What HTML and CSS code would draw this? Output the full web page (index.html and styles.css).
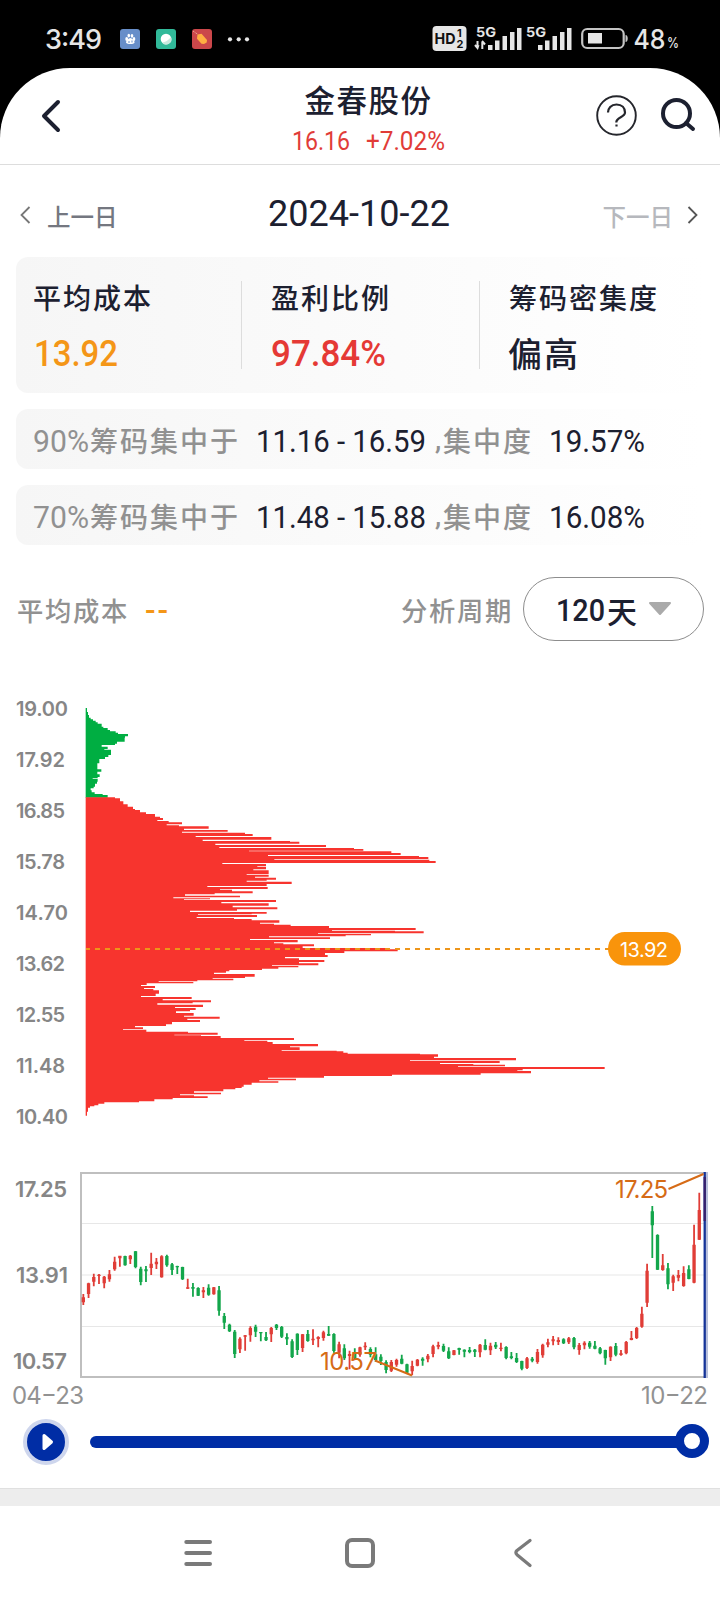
FILE: index.html
```html
<!DOCTYPE html>
<html lang="zh-CN">
<head>
<meta charset="utf-8">
<title>金春股份</title>
<link rel="stylesheet" href="styles.css">
</head>
<body>
<header class="status">
  <svg width="720" height="68" viewBox="0 0 720 68" fill="#e6e6e6">
    <text class="sys" x="45" y="49" font-size="27" textLength="57">3:49</text>
    <rect x="120" y="29" width="20" height="20" rx="3" fill="#678ec9"/>
    <g fill="#fff"><ellipse cx="126.7" cy="39" rx="1.4" ry="1.9"/><ellipse cx="128.8" cy="35.6" rx="1.3" ry="1.9"/><ellipse cx="132" cy="35.8" rx="1.3" ry="1.9"/><ellipse cx="134" cy="39" rx="1.3" ry="1.9"/><path d="M130.300 38c1.500 0 4.700 3.100 4.200 4.700-.6 1.700-7.600 1.700-8.400 0-.5-1.600 2.700-4.700 4.200-4.700z"/></g>
    <path d="M128 42h2M132 40.500v2" stroke="#678ec9"/>
    <rect x="156" y="29" width="20" height="20" rx="3" fill="#31b999"/>
    <circle cx="166" cy="39" r="5.300" fill="#fff"/><path d="M171 37a5.300 5.300 0 0 1-9 5.500q5-.5 9-5.500z" fill="#c9e9df"/>
    <rect x="192" y="29" width="20" height="20" rx="3" fill="#cb474a"/>
    <path d="M197.500 34.500l4-.8 5.500 6.300-.3 2.500-2.700 1.500-2.500-.3-4.500-5z" fill="#ffaf42"/><path d="M193 31l5 3.500" stroke="#f4c6a8" stroke-dasharray="1 1"/>
    <circle cx="230" cy="39.300" r="2.100"/><circle cx="238.700" cy="39.300" r="2.100"/><circle cx="247" cy="39.300" r="2.100"/>
    <rect x="432.500" y="26" width="34" height="25" rx="4"/>
    <g fill="#111"><text class="sys heavy" x="434.500" y="44" font-size="15" textLength="21" lengthAdjust="spacingAndGlyphs">HD</text><text class="sys heavy" x="457" y="37" font-size="11">1</text><text class="sys heavy" x="456.500" y="48" font-size="11">2</text></g>
    <text class="sys heavy" x="476" y="37" font-size="13" textLength="20" lengthAdjust="spacingAndGlyphs">5G</text>
    <text class="sys heavy" x="526" y="37" font-size="13" textLength="20" lengthAdjust="spacingAndGlyphs">5G</text>
    <path d="M477.500 41v6M475 45l2.500 3 1-3M482.300 49v-7M482 41l3 3.500" fill="none" stroke="#e6e6e6" stroke-width="2"/>
    <path d="M488 45h4.500v5H488zM495 40.500h4.500V50H495zM502.500 36h4.500v14h-4.500zM510 32h4.500v18H510zM517 28h4.500v22H517zM538 45h4.500v5H538zM545 40.500h4.500V50H545zM552.500 36h4.500v14h-4.500zM560 32h4.500v18H560zM567 28h4.500v22H567z"/>
    <rect x="582.200" y="29" width="41.500" height="19" rx="5" fill="none" stroke="#c4c4c4" stroke-width="2.200"/><rect x="588" y="33" width="14" height="10.500"/><path d="M625.500 35c3 0 3 7 0 7z" fill="#c4c4c4"/>
    <text class="sys" x="633.500" y="49" font-size="27" textLength="32" lengthAdjust="spacingAndGlyphs">48</text><text class="sys" x="667" y="48" font-size="14" textLength="12" lengthAdjust="spacingAndGlyphs">%</text>
  </svg>
</header>

<main class="app">
  <div class="titlebar">
    <svg class="back" width="64" height="40" viewBox="0 0 64 40"><path d="M58 6L44 20l14 14" fill="none" stroke="#1c2030" stroke-width="4" stroke-linecap="round" stroke-linejoin="round"/></svg>
    <div class="stock">
      <h1>金春股份</h1>
      <svg width="154" height="26" viewBox="0 0 154 26" class="num" fill="#e13c38" font-size="25"><text x="-1" y="22" textLength="58" lengthAdjust="spacingAndGlyphs">16.16</text><text x="73" y="22" textLength="79" lengthAdjust="spacingAndGlyphs">+7.02%</text></svg>
    </div>
    <svg class="tools" width="102" height="44" viewBox="0 0 102 44" fill="none">
      <circle cx="21.500" cy="22.500" r="19.300" stroke="#25262c" stroke-width="1.900"/>
      <path d="M13 19.500c0-4 3-8 8.500-8s8.500 3.500 8.500 8c0 5-9 4.500-8.700 10M21.500 31.500v2" stroke="#25262c" stroke-width="2.200"/>
      <circle cx="81.500" cy="20.500" r="13.500" stroke="#1c2030" stroke-width="4"/><path d="M91 30l7 6" stroke="#1c2030" stroke-width="4" stroke-linecap="round"/>
    </svg>
  </div>

  <nav class="days">
    <div class="prev"><svg width="11" height="18" viewBox="0 0 11 18"><path d="M9.500 1L1.500 9l8 8" fill="none" stroke="#777" stroke-width="1.800"/></svg><span>上一日</span></div>
    <svg width="182" height="40" viewBox="0 0 182 40" class="num" fill="#1c2030" font-size="37.500"><text x="0" y="33" textLength="182" lengthAdjust="spacingAndGlyphs">2024-10-22</text></svg>
    <div class="next"><span>下一日</span><svg width="11" height="18" viewBox="0 0 11 18"><path d="M1.500 1l8 8-8 8" fill="none" stroke="#555" stroke-width="1.800"/></svg></div>
  </nav>

  <section class="summary">
    <div class="cell"><b>平均成本</b><svg width="90" height="40" viewBox="0 0 90 40" class="num mid" fill="#f49617" font-size="36.500"><text x="0" y="32" textLength="84" lengthAdjust="spacingAndGlyphs">13.92</text></svg></div>
    <div class="cell"><b>盈利比例</b><svg width="120" height="40" viewBox="0 0 120 40" class="num mid" fill="#e53935" font-size="36.500"><text x="-1" y="32" textLength="115" lengthAdjust="spacingAndGlyphs">97.84%</text></svg></div>
    <div class="cell"><b>筹码密集度</b><strong>偏高</strong></div>
  </section>

  <section class="range">
    <svg width="57" height="34" viewBox="0 0 57 34" class="num" fill="#919191" font-size="31"><text x="0" y="27" textLength="56" lengthAdjust="spacingAndGlyphs">90%</text></svg><span class="lead">筹码集中于</span>
    <svg class="num span" width="178" height="34" viewBox="0 0 178 34" fill="#1c2030" font-size="31"><text x="-1" y="27" textLength="170" lengthAdjust="spacingAndGlyphs">11.16 - 16.59</text></svg>
    <span class="mark">,</span><span class="focus">集中度</span>
    <svg class="num" width="98" height="34" viewBox="0 0 98 34" fill="#1c2030" font-size="31"><text x="-1" y="27" textLength="96" lengthAdjust="spacingAndGlyphs">19.57%</text></svg>
  </section>
  <section class="range">
    <svg width="57" height="34" viewBox="0 0 57 34" class="num" fill="#919191" font-size="31"><text x="0" y="27" textLength="56" lengthAdjust="spacingAndGlyphs">70%</text></svg><span class="lead">筹码集中于</span>
    <svg class="num span" width="178" height="34" viewBox="0 0 178 34" fill="#1c2030" font-size="31"><text x="-1" y="27" textLength="170" lengthAdjust="spacingAndGlyphs">11.48 - 15.88</text></svg>
    <span class="mark">,</span><span class="focus">集中度</span>
    <svg class="num" width="98" height="34" viewBox="0 0 98 34" fill="#1c2030" font-size="31"><text x="-1" y="27" textLength="96" lengthAdjust="spacingAndGlyphs">16.08%</text></svg>
  </section>

  <section class="filter">
    <span>平均成本</span><i class="dash">--</i>
    <span class="period">分析周期</span>
    <div class="pill"><svg class="num mid" width="51" height="34" viewBox="0 0 51 34" fill="#1c2030" font-size="32"><text x="0" y="29" textLength="49" lengthAdjust="spacingAndGlyphs">120</text></svg><b>天</b><svg width="24" height="16" viewBox="0 0 24 16"><path d="M2 2h20L12 13z" fill="#aaa" stroke="#aaa" stroke-width="2" stroke-linejoin="round"/></svg></div>
  </section>

  <svg class="profile" width="720" height="510" viewBox="0 640 720 510">
    <g id="priceAxis" class="axis" fill="#868686" font-size="20"></g>
    <g transform="translate(60 780) scale(.33333)"><path id="loss" fill="#00ae42"/><path id="gain" fill="#f7342e"/></g>
    <path d="M86 949H610" stroke="#ee9519" stroke-width="2" stroke-dasharray="5 5" stroke-dashoffset="1"/>
    <rect x="608" y="932" width="73" height="33.500" rx="16.700" fill="#f9940b"/>
    <text class="axis light" x="620" y="957" font-size="20" textLength="48" fill="#fff">13.92</text>
  </svg>

  <svg class="kline" width="720" height="262" viewBox="0 1150 720 262">
    <path d="M81 1223.500H706M81 1275H706M81 1326.500H706" stroke="#e7e7e7"/>
    <rect x="81" y="1173" width="625" height="204" fill="none" stroke="#bfbfbf" stroke-width="2"/>
    <g id="candles" transform="translate(0 1150) scale(.33333)"></g>
    <path d="M704.700 1172v206" stroke="#15349a" stroke-width="2.300"/><path d="M704.700 1177v44" stroke="#38206c" stroke-width="2.300"/><path d="M707 1172v206" stroke="#b7bfdb" stroke-width="2"/>
    <path d="M668.500 1189l35-15M375 1360.500l37 15" stroke="#d66b16" stroke-width="2"/>
    <g class="axis" fill="#868686" font-size="22"><text x="15" y="1197" textLength="52">17.25</text><text x="16" y="1283" textLength="52">13.91</text><text x="13" y="1369" textLength="54">10.57</text></g>
    <g class="axis light" font-size="24"><text x="615" y="1198" textLength="53" fill="#d66b16">17.25</text><text x="320" y="1370" textLength="57" fill="#d66b16">10.57</text><text x="12" y="1404" textLength="72" fill="#929292">04−23</text><text x="641" y="1404" textLength="67" fill="#929292">10−22</text></g>
  </svg>

  <div class="player">
    <span class="play"><svg width="13" height="20" viewBox="0 0 13 20"><path d="M3 3.500L10.500 10 3 16.500z" fill="#fff" stroke="#fff" stroke-width="3" stroke-linejoin="round"/></svg></span>
    <span class="track"><span class="knob"></span></span>
  </div>
  <div class="band"></div>
  <footer class="keys">
    <svg width="720" height="94" viewBox="0 1506 720 94" fill="none" stroke="#7a7a7a" stroke-width="4" stroke-linecap="round" stroke-linejoin="round"><path d="M186.300 1542h23.700M186.300 1553h23.700M186.300 1564h23.700"/><rect x="347" y="1540" width="26" height="26" rx="5"/><path d="M530 1540.500l-13 10q-2.200 2 0 4.200l13 10.800" stroke-width="3.300"/></svg>
  </footer>
</main>
<script src="charts.js"></script>
</body>
</html>
```

FILE: styles.css
```css
* { box-sizing: border-box; }
body { margin: 0; width: 720px; height: 1600px; overflow: hidden; background: #000; font-family: "Noto Sans CJK SC", sans-serif; color: #1c2030; }
svg { display: block; flex: none; }
b, strong, h1 { font-weight: 500; margin: 0; }
.status { height: 68px; }
.sys { font-family: Inter, sans-serif; font-weight: 500; }
.heavy { font-weight: 700; }
.num { font-family: Roboto, sans-serif; font-weight: 450; overflow: visible; }
.mid { font-weight: 500; }
.axis { font-family: Inter, sans-serif; font-weight: 600; }
.light { font-weight: 400; }
.app { background: #fff; height: 1532px; border-radius: 70px 70px 0 0; display: flex; flex-direction: column; }
.titlebar { height: 97px; flex: none; border-bottom: 1px solid #ddd; display: grid; grid-template-columns: 250px 1fr 250px; }
.back { margin-top: 28px; }
.stock { display: flex; flex-direction: column; align-items: center; padding: 9px 0 0 17px; }
.stock h1 { font-size: 30.5px; line-height: 44px; height: 51px; letter-spacing: 1.5px; }
.stock svg { margin-left: 2px; }
.tools { margin: 25px 0 0 125px; }
.days { height: 92px; flex: none; padding: 0 22px 0 20px; display: grid; grid-template-columns: 1fr 182px 1fr; align-items: start; }
.days > svg { margin: 28px 0 0 0; }
.prev, .next { display: flex; align-items: center; font-size: 23.5px; font-weight: 500; line-height: 36px; padding-top: 33px; color: #747780; gap: 16px; }
.prev svg, .next svg { margin-top: -2px; }
.next { justify-content: flex-end; color: #b6b8bd; gap: 14px; }
.summary { flex: none; margin: 0 16px; height: 136px; border-radius: 12px; background: linear-gradient(90deg, #f6f6f6, #fff); display: grid; grid-template-columns: 226px 238px 1fr; padding: 24px 0; }
.cell { padding-left: 29px; height: 88px; border-right: 1px solid #ddd; display: flex; flex-direction: column; }
.cell:first-child { padding-left: 17px; }
.cell:last-child { border: 0; }
.cell b { flex: none; font-size: 28px; line-height: 32px; letter-spacing: 2px; height: 43px; white-space: nowrap; }
.cell svg { margin: 10px 0 -8px 1px; }
.cell strong { flex: none; font-size: 34px; line-height: 40px; letter-spacing: 2px; margin: 9px 0 -6px -1px; }
.range { flex: none; height: 60px; margin: 16px 16px 0; border-radius: 12px; padding: 0 0 0 17px; background: linear-gradient(90deg, #f6f6f6, #fff); display: flex; align-items: center; font-size: 28px; letter-spacing: 2px; font-weight: 500; line-height: 40px; color: #919191; white-space: nowrap; }
.range svg { margin-top: 5px; letter-spacing: 0; }
.range .lead, .range .focus { margin-top: 1px; }
.lead { width: 167px; }
.mark { font-family: Roboto, sans-serif; width: 8px; letter-spacing: 0; margin-top: 2px; }
.focus { width: 107px; }
.filter { height: 64px; flex: none; margin: 32px 16px 0; display: flex; align-items: center; font-size: 26.3px; font-weight: 450; letter-spacing: 1.7px; color: #919191; line-height: 40px; }
.filter > span { position: relative; left: 1px; top: 1px; }
.dash { font: 500 31px Roboto, sans-serif; letter-spacing: 2px; color: #f49617; margin: 2px 0 0 17px; }
.period { margin-left: auto; margin-right: 11px; }
.pill { width: 181px; height: 64px; border: 1px solid #8d8d8d; border-radius: 32px; display: flex; align-items: center; padding-left: 32px; color: #1c2030; letter-spacing: 0; }
.pill b { font-size: 30px; line-height: 40px; margin: 2px 11px 0 0; }
.profile, .kline { flex: none; }
.profile { margin-top: -1px; }
.player { flex: none; height: 76px; display: flex; align-items: flex-start; padding: 7px 17px 0 23px; }
.play { width: 46px; height: 46px; border-radius: 50%; background: #002da5; border: 4px solid #ced6ed; display: flex; align-items: center; justify-content: center; margin-right: 21px; padding-left: 3px; }
.track { width: 610px; height: 12px; margin-top: 17px; border-radius: 6px; background: #002da5; position: relative; }
.knob { position: absolute; right: -9px; top: -12px; width: 34px; height: 34px; border: 9px solid #002da5; border-radius: 50%; background: #fff; }
.band { flex: none; height: 18px; background: #ededed; border-top: 1px solid #e0e0e0; }
.keys { height: 94px; flex: none; }
```

FILE: charts.js
```js
const NS = 'http://www.w3.org/2000/svg';

// Price axis of the cost distribution
['19.00', '17.92', '16.85', '15.78', '14.70', '13.62', '12.55', '11.48', '10.40'].forEach((label, i) => {
  const t = document.createElementNS(NS, 'text');
  t.setAttribute('x', 16);
  t.setAttribute('y', 716 + i * 51);
  t.setAttribute('textLength', i === 0 || i === 4 || i === 8 ? 52 : 49);
  t.textContent = label;
  document.getElementById('priceAxis').append(t);
});

// Each pair is the top of a price row and its right edge
function profile(id, rows, bottom) {
  const v = rows.trim().split(/\s+/).map(r => r.split(':').map(Number));
  let d = `M77 ${v[0][0]}`;
  v.forEach(([y, x], i) => { d += `V${y}H${x}V${i + 1 < v.length ? v[i + 1][0] : bottom}`; });
  document.getElementById(id).setAttribute('d', d + 'H77Z');
}
profile('loss', `-216:81 -204:84 -195:87 -187:92 -182:99 -178:107 -173:113 -169:125 -160:130 -156:143
-150:150 -146:167 -142:174 -138:204 -131:195 -127:194 -115:171 -109:165 -105:125 -100:143 -93:133
-91:153 -75:145 -69:135 -63:118 -50:112 -32:124 -25:112 -17:119 -9:113 -5:98 -3:113 5:111 11:105
20:101 25:92 31:95 37:104 42:128 45:143`, 53);
profile('gain', `52:165 55:180 64:190 73:203 80:219 87:225 90:240 97:258 102:285 110:300 114:309
120:292 123:326 127:366 133:320 136:357 139:446 146:372 150:503 155:366 158:555 162:578 168:407
171:634 179:428 183:690 185:718 191:466 195:798 201:478 204:882 207:910 212:567 214:994 219:1022
225:624 228:1077 231:1105 237:643 239:1108 243:1127 249:487 252:618 259:592 261:618 268:580 271:626
282:560 284:626 290:585 293:648 299:620 302:560 305:695 312:620 318:442 321:623 327:480 329:516
334:578 340:464 343:375 347:540 352:340 355:450 358:372 360:648 366:484 370:626 377:518 382:652
388:531 392:390 396:620 401:575 403:414 405:591 411:410 414:522 417:575 421:658 428:600 431:642
434:692 438:807 444:1067 450:816 452:1005 454:1091 460:774 462:933 466:857 469:627 472:810 477:570
480:713 487:642 490:670 493:762 499:728 504:975 508:1013 514:853 519:795 525:803 531:675 535:717
540:793 546:717 550:775 556:636 558:715 562:655 566:606 570:508 574:498 578:462 582:584 590:555
594:458 596:520 601:412 604:296 606:400 610:260 615:243 618:285 624:252 627:280 631:297 641:287
648:243 651:395 657:308 661:453 667:398 670:292 674:429 681:345 684:407 690:390 694:348 699:401
707:372 710:479 716:382 720:420 726:336 733:318 738:225 742:249 747:189 749:259 755:384 758:473
764:343 766:423 768:482 774:702 780:553 782:622 786:638 792:774 799:690 802:719 810:665 812:830
814:850 818:863 821:1080 823:1134 830:1122 834:1368 841:1050 843:1319 849:1140 852:1240 854:1335
859:1194 861:1634 867:1388 871:1372 873:1413 880:1262 884:996 888:792 893:624 896:708 901:598 904:655
908:575 914:551 920:545 924:526 928:490 934:402 938:483 943:360 946:402 949:443 954:338 958:283
964:237 967:133 971:115 976:103 979:90 983:84 995:81`, 1007);

// Daily candles: direction, high, low, body top, body bottom
const days = `r432 465 442 457,r398 444 400 432,r371 409 381 395,r372 402 374 378,r378 415 380 400,r360 395 373 388,
r320 362 335 358,r317 350 317 325,g317 347 318 346,r315 342 317 328,g303 355 304 351,g350 406 356 396,g348 396 358 364,
r308 375 341 354,r324 357 335 343,r316 383 319 382,g314 350 318 346,g339 375 343 360,g347 372 348 352,g350 390 351 388,
r386 417 412 416,g399 440 411 416,g412 438 414 437,r411 444 421 427,g403 437 413 434,r411 434 412 433,g408 497 421 482,
g489 537 498 518,g521 546 524 544,g540 624 545 612,r562 609 566 598,r555 602 556 560,r529 575 534 556,g524 561 530 545,
g546 574 546 550,g546 573 561 571,r531 576 534 553,g522 540 524 534,g528 564 531 560,g550 585 561 568,g568 624 574 621,
g550 615 551 600,r552 606 553 594,g540 575 552 573,r538 585 566 571,r559 592 561 567,r542 572 547 564,g528 558 552 557,
g550 608 552 603,r575 625 583 608,g583 630 595 625,r602 658 612 618,g595 630 606 625,r590 620 592 614,r577 600 587 592,
g592 622 597 614,g592 635 613 630,g613 645 620 633,g631 670 636 660,r630 666 636 662,r626 650 630 644,g614 643 626 641,
g641 672 643 668,r632 676 648 664,r627 649 629 647,g622 647 626 632,r612 637 617 628,r584 622 589 612,r575 598 585 590,
g581 606 588 602,g592 627 604 625,r600 616 601 615,g593 614 594 600,g598 622 599 605,g591 610 600 606,g597 621 599 606,
r582 622 584 607,g568 601 585 599,r578 615 587 601,g576 597 584 592,r578 604 593 597,g589 628 591 624,g606 628 619 624,
g609 639 624 636,g632 661 633 656,r621 657 625 654,g621 637 626 632,r597 641 606 636,r581 623 584 616,r566 592 577 584,
r558 586 568 574,r562 585 570 576,g565 582 568 580,r561 582 565 577,g561 598 564 592,r579 614 585 600,r574 598 578 586,
g573 596 578 590,g573 598 587 596,g591 613 595 610,g599 644 600 625,r589 633 590 622,g579 619 588 614,r600 617 610 615,
r573 613 576 610,r543 571 564 570,r531 567 534 564,r470 533 491 530,r341 471 362 458,g168 324 184 226,g253 360 255 359,
r312 362 346 360,g339 418 355 403,r374 423 379 398,r360 394 375 383,r349 410 369 408,g346 388 358 387,r224 400 284 398,
r128 270 180 269`;
days.split(',').forEach((s, i) => {
  s = s.trim();
  const [hi, lo, top, bot] = s.slice(1).split(' ').map(Number);
  const x = 250 + i * 15.66;
  const p = document.createElementNS(NS, 'path');
  p.setAttribute('d', `M${x - 2.7} ${hi}h5.400V${lo}h-5.400zM${x - 5} ${top}h10V${bot}h-10z`);
  p.setAttribute('fill', s[0] === 'r' ? '#e03d37' : '#13a64b');
  document.getElementById('candles').append(p);
});
```
